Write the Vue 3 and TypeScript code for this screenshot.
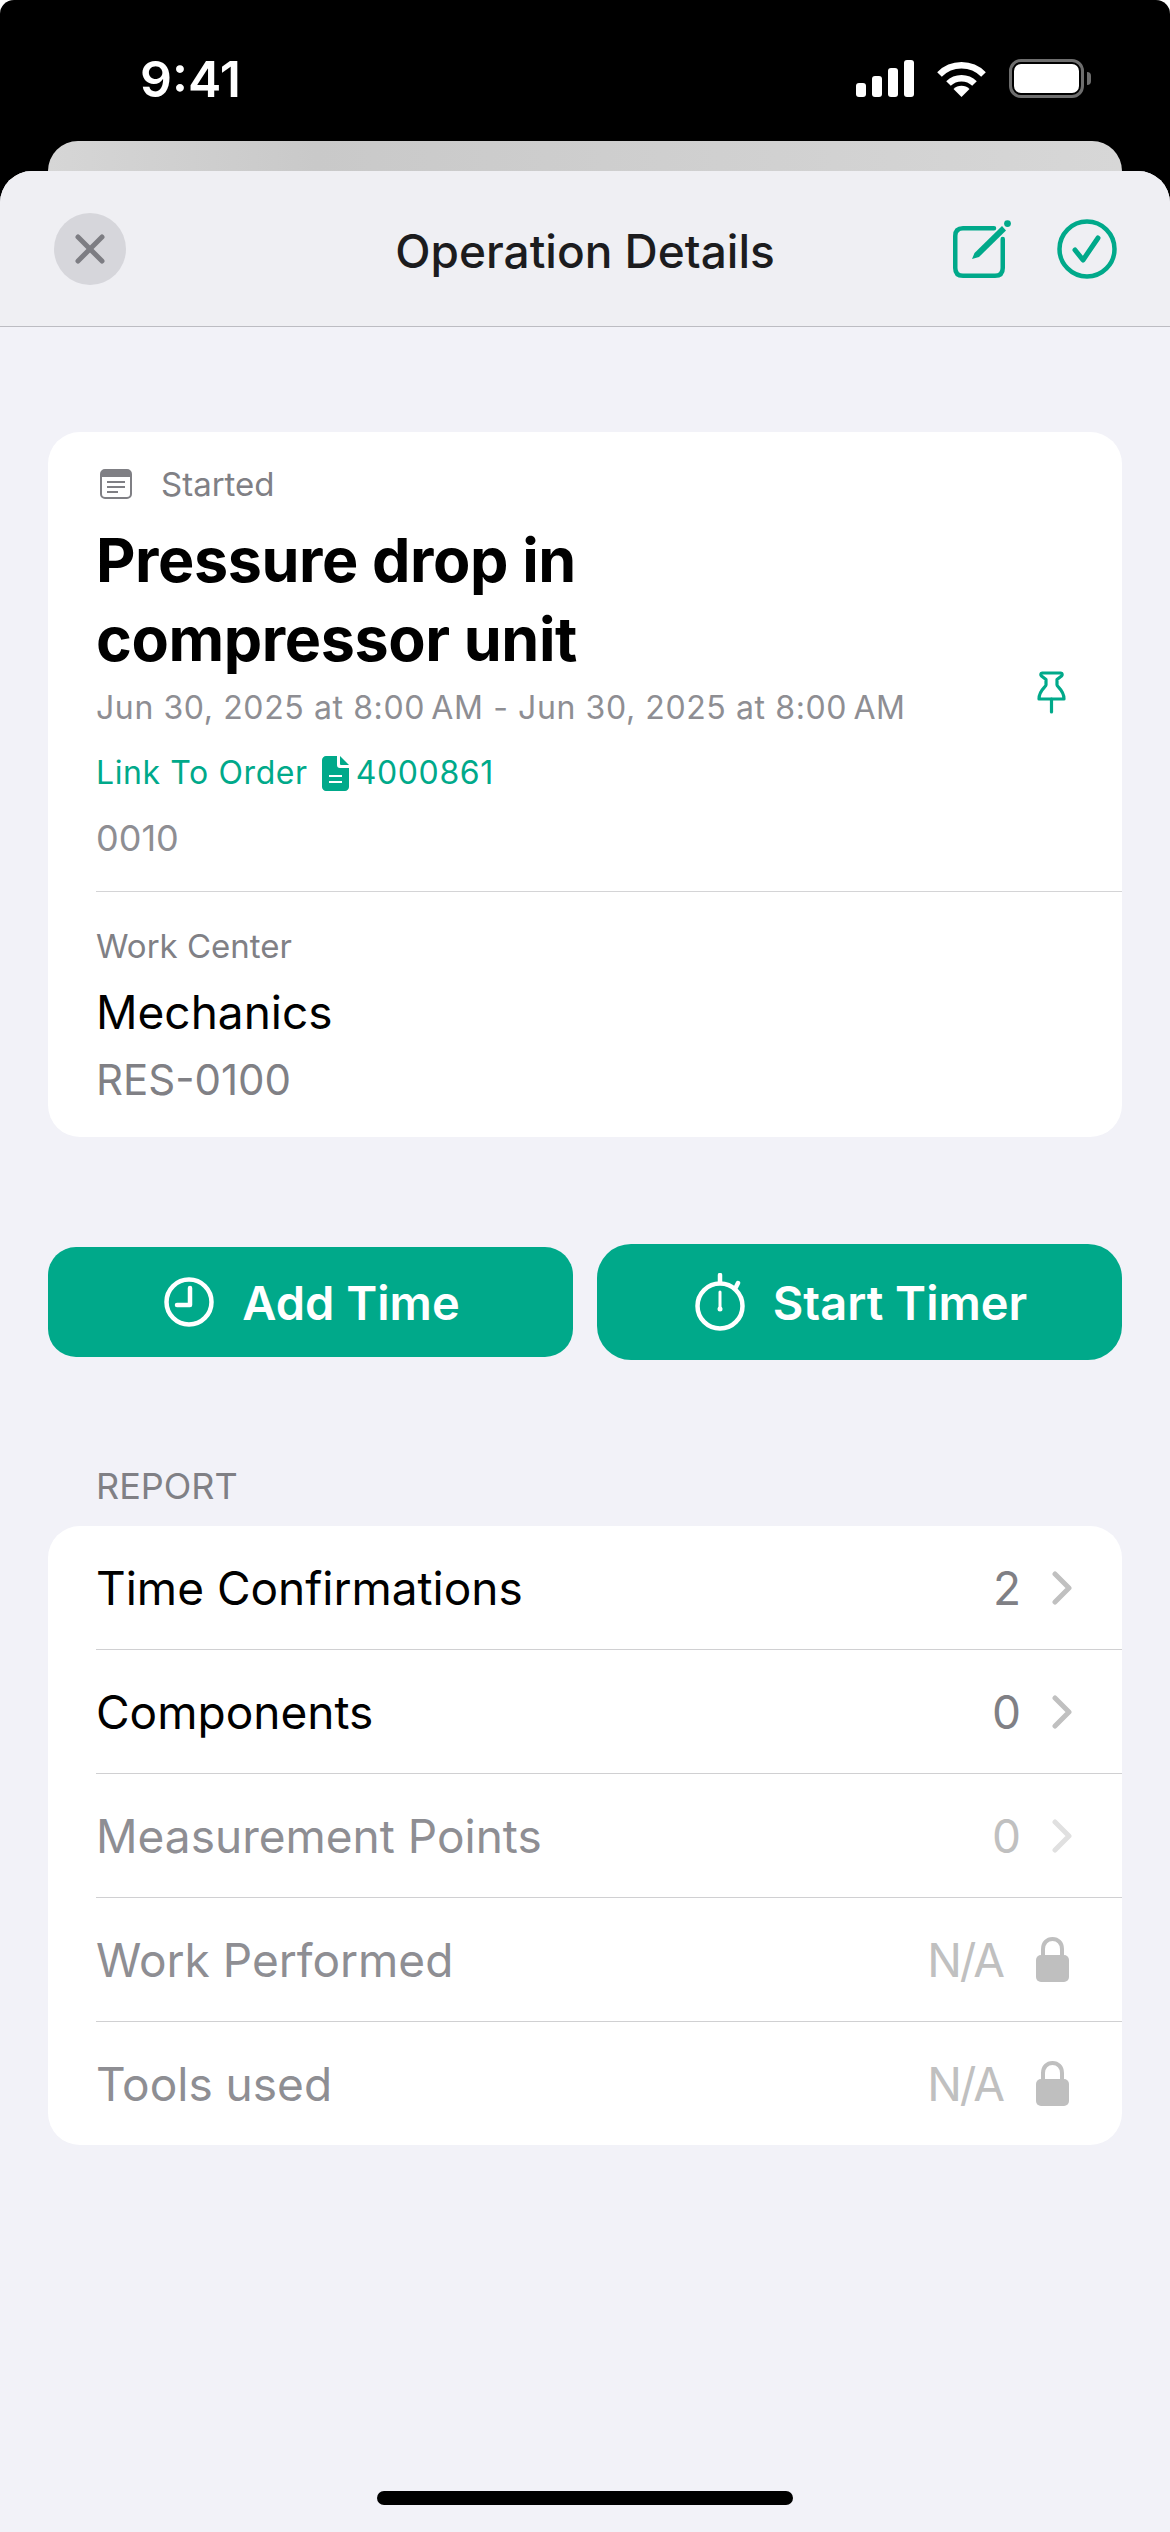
<script setup lang="ts">
type ReportRow = {
  label: string
  value: string
  state: 'active' | 'dim' | 'locked'
}

const rows: ReportRow[] = [
  { label: 'Time Confirmations', value: '2', state: 'active' },
  { label: 'Components', value: '0', state: 'active' },
  { label: 'Measurement Points', value: '0', state: 'dim' },
  { label: 'Work Performed', value: 'N/A', state: 'locked' },
  { label: 'Tools used', value: 'N/A', state: 'locked' },
]
</script>

<template>
  <div class="screen">
    <div class="status-bar">
      <span class="clock">9:41</span>
      <div class="status-icons">
        <svg width="58" height="37" viewBox="0 0 58 37" fill="#fff">
          <rect x="0" y="23" width="10" height="14" rx="3" />
          <rect x="16" y="16" width="10" height="21" rx="3" />
          <rect x="32" y="8" width="10" height="29" rx="3" />
          <rect x="48" y="0" width="10" height="37" rx="3" />
        </svg>
        <svg width="49" height="37" viewBox="0 0 49 37" fill="none" stroke="#fff" stroke-width="6.5">
          <path d="M2.5 14.5A31 31 0 0 1 46.5 14.5" />
          <path d="M11.5 23.5A18.5 18.5 0 0 1 37.5 23.5" />
          <path d="M24.5 37L16.5 29A11.3 11.3 0 0 1 32.5 29Z" fill="#fff" stroke="none" />
        </svg>
        <div class="battery">
          <div class="battery__fill"></div>
        </div>
      </div>
    </div>

    <div class="sheet-behind"></div>

    <div class="sheet">
      <header class="nav">
        <div class="nav__close">
          <svg width="30" height="30" viewBox="0 0 30 30" stroke="#7d7d83" stroke-width="5" stroke-linecap="round">
            <path d="M3 3L27 27M27 3L3 27" />
          </svg>
        </div>
        <h1 class="nav__title">Operation Details</h1>
        <div class="nav__actions">
          <svg width="58" height="58" viewBox="0 0 58 58" fill="none">
            <path d="M41 8.25H10C5 8.25 2.25 11 2.25 16V48C2.25 53 5 55.75 10 55.75H42C47 55.75 49.75 53 49.75 48V19" stroke="#00a98a" stroke-width="4.5" stroke-linecap="round" />
            <path d="M19 39L21.5 33L49 6L53 10.5L26 37Z" fill="#00a98a" />
            <circle cx="54.5" cy="3.6" r="3.4" fill="#00a98a" />
          </svg>
          <svg width="60" height="60" viewBox="0 0 60 60" fill="none" stroke="#00a98a" stroke-linecap="round" stroke-linejoin="round">
            <circle cx="30" cy="30" r="27.5" stroke-width="4.5" />
            <path d="M18 31L26 41L41 19" stroke-width="5" />
          </svg>
        </div>
      </header>

      <main class="content">
        <section class="card">
          <div class="card__main">
            <div class="status">
              <svg width="32" height="30" viewBox="0 0 32 30">
                <rect x="1" y="1" width="30" height="28" rx="4" fill="#fff" stroke="#7f7f84" stroke-width="2" />
                <path d="M1 5C1 2 3 1 5 1H27C29 1 31 2 31 5V8H1Z" fill="#7f7f84" />
                <path d="M7 13H25M7 18H25M7 23H18" stroke="#7f7f84" stroke-width="2" />
              </svg>
              <span>Started</span>
            </div>
            <h2 class="card__title">Pressure drop in<br />compressor unit</h2>
            <div class="card__dates">Jun 30, 2025 at 8:00&#8239;AM - Jun 30, 2025 at 8:00&#8239;AM</div>
            <div class="card__link">
              <span>Link To Order</span>
              <svg width="27" height="35" viewBox="0 0 27 35">
                <path d="M4 0H15V9C15 11 16 12 18 12H27V31C27 33 25 35 23 35H4C2 35 0 33 0 31V4C0 2 2 0 4 0Z" fill="#00a98a" />
                <path d="M18 0L27 9H19C18 9 18 8 18 8Z" fill="#00a98a" />
                <path d="M7 20H20M7 26H20" stroke="#fff" stroke-width="2" />
              </svg>
              <span class="card__order">4000861</span>
            </div>
            <div class="card__code">0010</div>
            <svg class="pin" width="29" height="44" viewBox="0 0 29 44" fill="none" stroke="#00a98a" stroke-width="3.2" stroke-linejoin="round" stroke-linecap="round">
              <path d="M5 3H24C25.5 3 25.5 5 24.5 6L20 9.5V15C20 17 27 20 27 29H2C2 20 9 17 9 15V9.5L4.5 6C3.5 5 3.5 3 5 3Z" />
              <path d="M14.5 29V42" />
            </svg>
          </div>
          <div class="card__divider"></div>
          <div class="card__center">
            <div class="center-label">Work Center</div>
            <div class="center-name">Mechanics</div>
            <div class="center-code">RES-0100</div>
          </div>
        </section>

        <div class="actions">
          <button class="btn btn--small" type="button">
            <svg width="50" height="50" viewBox="0 0 50 50" fill="none" stroke="#fff" stroke-width="4.5" stroke-linecap="round" stroke-linejoin="round">
              <circle cx="25" cy="25" r="22.5" />
              <path d="M26 11V28H13" />
            </svg>
            <span>Add Time</span>
          </button>
          <button class="btn btn--large" type="button">
            <svg width="50" height="58" viewBox="0 0 50 58" fill="none" stroke="#fff" stroke-width="4.5" stroke-linecap="round">
              <circle cx="25" cy="33" r="22.5" />
              <path d="M25 2V9M43 10L41 14" />
              <path d="M25 19V35" stroke-width="3" />
              <circle cx="25" cy="36" r="2.5" fill="#fff" stroke="none" />
            </svg>
            <span>Start Timer</span>
          </button>
        </div>

        <div class="section-label">REPORT</div>
        <section class="list">
          <div
            v-for="row in rows"
            :key="row.label"
            class="row"
            :class="`row--${row.state}`"
          >
            <span class="row__label">{{ row.label }}</span>
            <span class="row__value">{{ row.value }}</span>
            <svg v-if="row.state === 'locked'" class="row__lock" width="33" height="45" viewBox="0 0 33 45">
              <path d="M7 20V12C7 6 11 2 16.5 2C22 2 26 6 26 12V20" fill="none" stroke="#bfbfbf" stroke-width="4" />
              <rect x="0" y="18" width="33" height="27" rx="5" fill="#bfbfbf" />
            </svg>
            <svg v-else class="row__chevron" width="20" height="34" viewBox="0 0 20 34" fill="none" stroke-width="5" stroke-linecap="round" stroke-linejoin="round">
              <path d="M3 3L17 17L3 31" />
            </svg>
          </div>
        </section>

        <div class="home-indicator"></div>
      </main>
    </div>
  </div>
</template>

<style>
html,
body {
  margin: 0;
  background: #fff;
}
</style>

<style scoped>
.screen {
  position: relative;
  display: flex;
  flex-direction: column;
  width: 1170px;
  height: 2532px;
  overflow: hidden;
  border-radius: 14px 14px 0 0;
  background: #000;
  font-family: Inter, "Noto Sans", sans-serif;
}

.status-bar {
  display: flex;
  align-items: center;
  justify-content: space-between;
  height: 141px;
  padding: 16px 86px 0 140px;
  box-sizing: border-box;
  color: #fff;
}

.clock {
  font-size: 50px;
  font-weight: 600;
  line-height: 1;
}

.status-icons {
  display: flex;
  align-items: center;
  gap: 23px;
}

.battery {
  position: relative;
  width: 75px;
  height: 39px;
  padding: 2px;
  box-sizing: border-box;
  border: 3px solid #6e6e6e;
  border-radius: 12px;
}

.battery::after {
  content: "";
  position: absolute;
  top: 10px;
  right: -10px;
  width: 4px;
  height: 13px;
  border-radius: 0 4px 4px 0;
  background: #6e6e6e;
}

.battery__fill {
  height: 100%;
  border-radius: 7px;
  background: #fff;
}

.sheet-behind {
  height: 30px;
  margin: 0 48px;
  border-radius: 30px 30px 0 0;
  background: linear-gradient(90deg, #d6d6d6 0%, #c9c9c9 25%, #d7d7d7 100%);
}

.sheet {
  flex: 1;
  display: flex;
  flex-direction: column;
  overflow: hidden;
  border-radius: 32px 32px 0 0;
  background: #f2f2f8;
}

.nav {
  position: relative;
  flex: none;
  display: flex;
  align-items: center;
  justify-content: space-between;
  height: 156px;
  padding: 0 53px 0 54px;
  box-sizing: border-box;
  border-bottom: 1px solid #bcbcc2;
  background: #efeff3;
}

.nav__close {
  display: flex;
  align-items: center;
  justify-content: center;
  width: 72px;
  height: 72px;
  border-radius: 50%;
  background: #d6d6db;
}

.nav__title {
  position: absolute;
  left: 0;
  right: 0;
  top: 52px;
  margin: 0;
  text-align: center;
  font-size: 46px;
  font-weight: 500;
  line-height: 56px;
  color: #1c1c1e;
}

.nav__actions {
  display: flex;
  align-items: center;
  gap: 46px;
}

.content {
  flex: 1;
  display: flex;
  flex-direction: column;
  padding: 105px 48px 27px;
  min-height: 0;
}

.card {
  height: 705px;
  padding-left: 48px;
  box-sizing: border-box;
  border-radius: 32px;
  background: #fff;
}

.card__main {
  position: relative;
  padding: 35px 0 31px;
}

.status {
  display: flex;
  align-items: center;
  gap: 29px;
  height: 34px;
  font-size: 33px;
  color: #808085;
}

.status svg {
  margin-left: 4px;
}

.card__title {
  margin: 20px 0 0;
  font-size: 61px;
  font-weight: 700;
  line-height: 79px;
  letter-spacing: -0.4px;
  color: #000;
}

.card__dates {
  margin-top: 7px;
  font-size: 32px;
  line-height: 44px;
  letter-spacing: 0.6px;
  color: #8e8e93;
}

.card__link {
  display: flex;
  align-items: center;
  gap: 14px;
  margin-top: 21px;
  font-size: 32px;
  line-height: 44px;
  letter-spacing: 0.6px;
  color: #00a98a;
}

.card__order {
  margin-left: -7px;
}

.card__code {
  margin-top: 21px;
  font-size: 36px;
  line-height: 44px;
  color: #8e8e93;
}

.pin {
  position: absolute;
  right: 56px;
  top: 238px;
}

.card__divider {
  height: 1px;
  background: #d4d4d6;
}

.card__center {
  padding-top: 34px;
}

.center-label {
  font-size: 33px;
  line-height: 40px;
  color: #808085;
}

.center-name {
  margin-top: 18px;
  font-size: 46px;
  line-height: 56px;
  color: #000;
}

.center-code {
  margin-top: 16px;
  font-size: 42px;
  line-height: 48px;
  color: #808085;
}

.actions {
  display: flex;
  align-items: center;
  gap: 24px;
  margin-top: 107px;
  height: 116px;
}

.btn {
  flex: 1;
  display: flex;
  align-items: center;
  justify-content: center;
  gap: 28px;
  padding: 0 0 0 3px;
  border: 0;
  color: #fff;
  background: #00a98a;
  font-family: inherit;
  font-size: 47px;
  font-weight: 600;
}

.btn--small {
  height: 110px;
  border-radius: 28px;
}

.btn--large {
  height: 116px;
  border-radius: 34px;
}

.section-label {
  margin: 104px 0 0 48px;
  font-size: 36px;
  line-height: 44px;
  color: #808085;
}

.list {
  margin-top: 18px;
  border-radius: 32px;
  background: #fff;
  overflow: hidden;
}

.row {
  display: flex;
  align-items: center;
  height: 124px;
  margin-left: 48px;
  padding-right: 50px;
  box-sizing: border-box;
  border-bottom: 1px solid #d0d0d2;
  font-size: 46px;
  color: #000;
}

.row:last-child {
  border-bottom: 0;
  height: 123px;
}

.row__label {
  flex: 1;
}

.row__value {
  color: #808085;
}

.row__chevron {
  margin-left: 31px;
  stroke: #c0c0c0;
}

.row__lock {
  margin-left: 33px;
  margin-right: 3px;
}

.row--dim .row__label,
.row--locked .row__label {
  color: #8e8e93;
}

.row--dim .row__value,
.row--locked .row__value {
  color: #c0c0c0;
}

.row--locked .row__value {
  letter-spacing: -2px;
}

.row--dim .row__chevron {
  stroke: #e0e0e0;
}

.home-indicator {
  width: 416px;
  height: 14px;
  margin: auto auto 0;
  border-radius: 7px;
  background: #000;
}
</style>
